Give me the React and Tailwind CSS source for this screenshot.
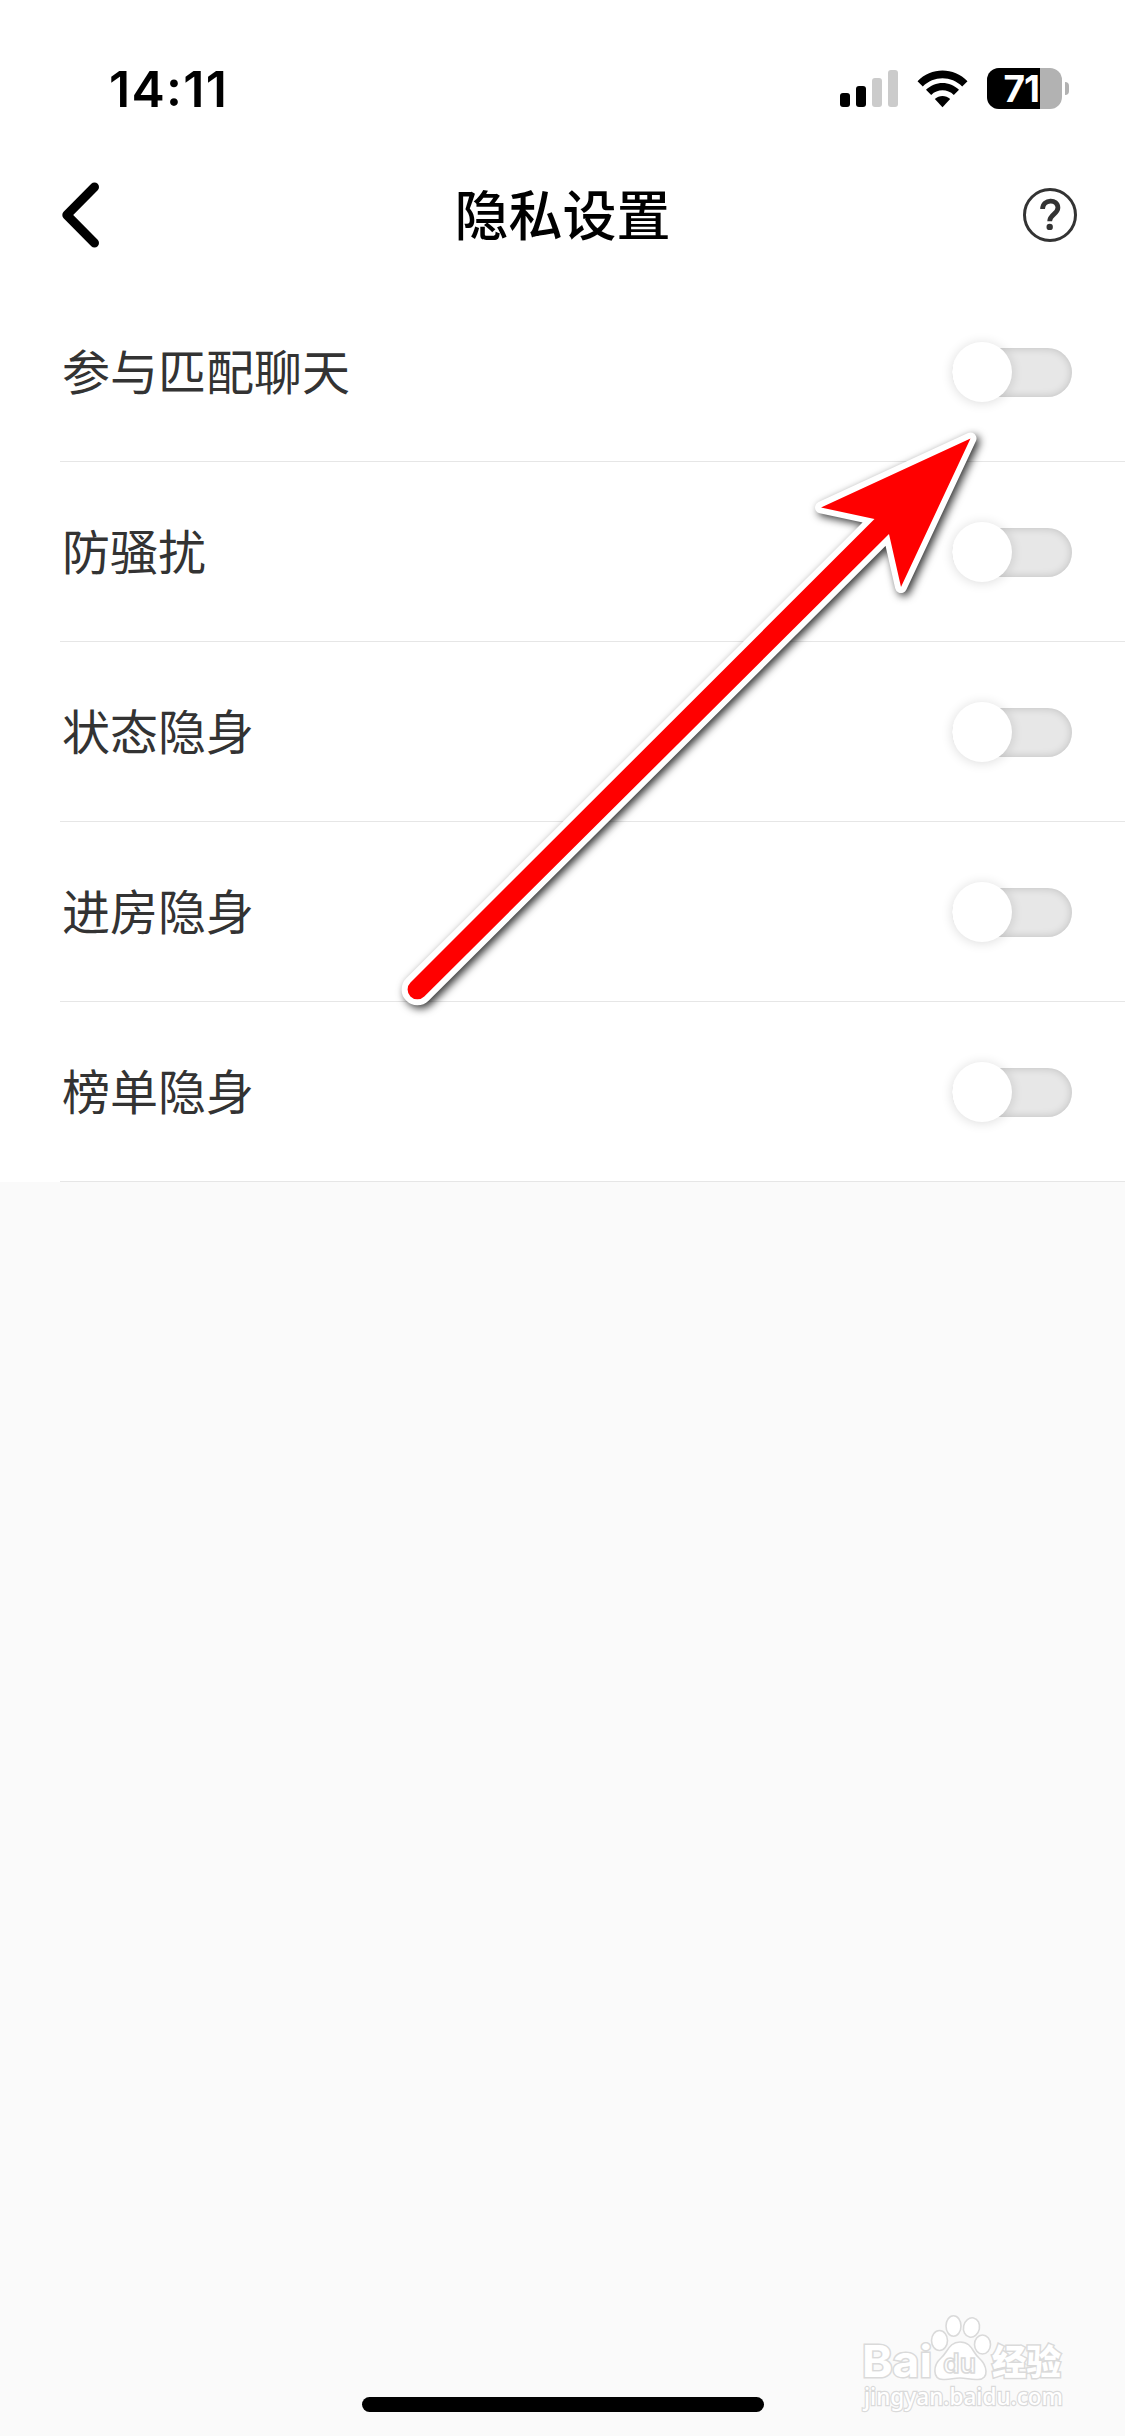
import React, { useState } from 'react';

const settings = [
  { id: 'match', label: '参与匹配聊天' },
  { id: 'harass', label: '防骚扰' },
  { id: 'status', label: '状态隐身' },
  { id: 'room', label: '进房隐身' },
  { id: 'rank', label: '榜单隐身' },
];

const StatusBar = () => {
  return (
    <div className="h-[150px] pt-[68px] pl-[109px] pr-14 flex justify-between items-start font-['Inter',sans-serif]">
      <div className="h-[42px] flex items-center text-[50px] leading-none font-semibold tracking-[1.3px] text-black">
        14<span className="relative -top-px">:</span>11
      </div>
      <div className="h-[41px] flex items-center">
        <div className="flex items-end gap-1.5 h-[37px] mr-[19px]">
          <div className="w-2.5 h-3.5 rounded-[3px] bg-black" />
          <div className="w-2.5 h-[21px] rounded-[3px] bg-black" />
          <div className="w-2.5 h-[29px] rounded-[3px] bg-[#cbcbcb]" />
          <div className="w-2.5 h-[37px] rounded-[3px] bg-[#cbcbcb]" />
        </div>
        <svg width="51" height="38" viewBox="0 0 51 38" className="mr-[19px]">
          <path d="M0.5 11.2 C14 -3.2 37 -3.2 50.5 11.2 L45.2 16.4 C34.5 5.4 16.5 5.4 5.8 16.4 Z" fill="#000" />
          <path d="M9 19.8 C18 10.6 33 10.6 42 19.8 L36.8 25 C30.5 18.8 20.5 18.8 14.2 25 Z" fill="#000" />
          <path d="M17.8 29 C22.2 25 28.8 25 33.2 29 L25.5 37.2 Z" fill="#000" />
        </svg>
        <div className="w-[75px] h-[41px] rounded-[12px] bg-[#b2b2b2]">
          <div className="w-[53px] h-full pr-px rounded-l-[12px] bg-black flex items-center justify-end">
            <span className="text-[37px] leading-[45px] font-bold tracking-[-1px] text-white">71</span>
          </div>
        </div>
        <div className="w-1 h-[13px] ml-[3px] rounded-r-full bg-[#b2b2b2]" />
      </div>
    </div>
  );
};

const Header = () => {
  return (
    <div className="h-[132px] pl-[60px] pr-12 pb-0.5 flex justify-between items-center">
      <button aria-label="返回">
        <svg width="42" height="66" viewBox="0 0 42 66" fill="none" stroke="#000" strokeWidth="9" strokeLinecap="round" strokeLinejoin="round">
          <path d="M34.5 5 L6.8 33 L34.5 61" />
        </svg>
      </button>
      <h1 className="pb-1 text-[54px] leading-none font-medium text-black">隐私设置</h1>
      <button aria-label="帮助">
        <svg width="54" height="54" viewBox="0 0 54 54" fill="none" stroke="#333" strokeLinecap="butt">
          <circle cx="27" cy="27" r="25.5" strokeWidth="3" />
          <path d="M19.6 21 C20 10.6 34.9 10.6 34.9 19.8 C34.9 25.8 26.7 26.5 26.7 33.3" strokeWidth="4.8" />
          <circle cx="26.7" cy="38.9" r="3.2" fill="#333" stroke="none" />
        </svg>
      </button>
    </div>
  );
};

const Toggle = ({ checked, onChange }) => {
  return (
    <button
      role="switch"
      aria-checked={checked}
      onClick={onChange}
      className={`w-[120px] h-[49px] mt-px flex items-center rounded-full ${
        checked ? 'justify-end bg-green-400' : 'justify-start bg-[#e7e7e7]'
      } shadow-[inset_0_0_9px_rgba(0,0,0,0.18)]`}
    >
      <span className="w-[60px] h-[60px] shrink-0 rounded-full bg-white shadow-[0_1px_12px_rgba(0,0,0,0.14)]" />
    </button>
  );
};

// Red pointer drawn over the list, towards the first switch
const Arrow = () => {
  return (
    <svg
      className="absolute left-0 top-0 pointer-events-none drop-shadow-[3px_3px_4px_rgba(0,0,0,0.8)]"
      width="1125"
      height="1100"
      viewBox="0 0 1125 1100"
    >
      <path
        d="M410.5 982.5 L874.5 519 L821 507.5 L970.5 438.5 L901 587 L889 534 L424.3 996.5 A9.8 9.8 0 0 1 410.5 982.5 Z"
        fill="#ff0000"
        stroke="#fff"
        strokeWidth="12"
        strokeLinejoin="round"
        paintOrder="stroke"
      />
    </svg>
  );
};

const Watermark = () => {
  return (
    <svg
      className="absolute left-[855px] top-[2310px] pointer-events-none"
      width="220"
      height="106"
      viewBox="0 0 220 106"
      fill="#fff"
      stroke="#dadada"
      strokeWidth="1.6"
    >
      <g paintOrder="stroke" strokeWidth="3">
        <text x="7" y="67" fontFamily="Inter, sans-serif" fontWeight="700" fontSize="44" textLength="70" lengthAdjust="spacingAndGlyphs">Bai</text>
        <text x="137" y="65" fontFamily="'Noto Sans CJK SC', sans-serif" fontWeight="900" fontSize="35" textLength="69" lengthAdjust="spacingAndGlyphs">经验</text>
        <text x="9" y="95" fontFamily="'Noto Sans', sans-serif" fontWeight="500" fontSize="23" strokeWidth="2.4" textLength="199" lengthAdjust="spacingAndGlyphs">jingyan.baidu.com</text>
      </g>
      <ellipse cx="84.5" cy="30.5" rx="8" ry="10" />
      <ellipse cx="98.5" cy="16" rx="7.5" ry="10.2" />
      <ellipse cx="116.5" cy="17.5" rx="8" ry="9.8" transform="rotate(12 116.5 17.5)" />
      <ellipse cx="127.5" cy="34.5" rx="8" ry="9.5" />
      <path d="M105 32 C117 32 117 42 124 48 C132 55 135 69 123 69.5 C115 70 112 68 105 68 C98 68 95 70 88 69.5 C77 69 78 55 86 48 C93 42 94 32 105 32 Z" />
      <text x="88" y="63" fontFamily="Inter, sans-serif" fontWeight="600" fontSize="27" textLength="33" lengthAdjust="spacingAndGlyphs">du</text>
    </svg>
  );
};

const App = () => {
  const [enabled, setEnabled] = useState({});

  const toggle = (id) => {
    setEnabled((prev) => ({ ...prev, [id]: !prev[id] }));
  };

  return (
    <div className="relative w-[1125px] h-[2436px] overflow-hidden flex flex-col bg-[#fafafa] font-['Noto_Sans_CJK_SC',sans-serif]">
      <div className="bg-white">
        <StatusBar />
        <Header />
        <ul>
          {settings.map((item) => (
            <li
              key={item.id}
              className="h-[180px] ml-[60px] pl-0.5 pr-[53px] flex justify-between items-center border-b border-[#e6e6e6]"
            >
              <span className="pb-1.5 text-[48px] leading-none text-[#333]">{item.label}</span>
              <Toggle checked={!!enabled[item.id]} onChange={() => toggle(item.id)} />
            </li>
          ))}
        </ul>
      </div>
      <div className="mt-auto mb-6 mx-auto w-[402px] h-[15px] rounded-full bg-black" />
      <Arrow />
      <Watermark />
    </div>
  );
};

export default App;
